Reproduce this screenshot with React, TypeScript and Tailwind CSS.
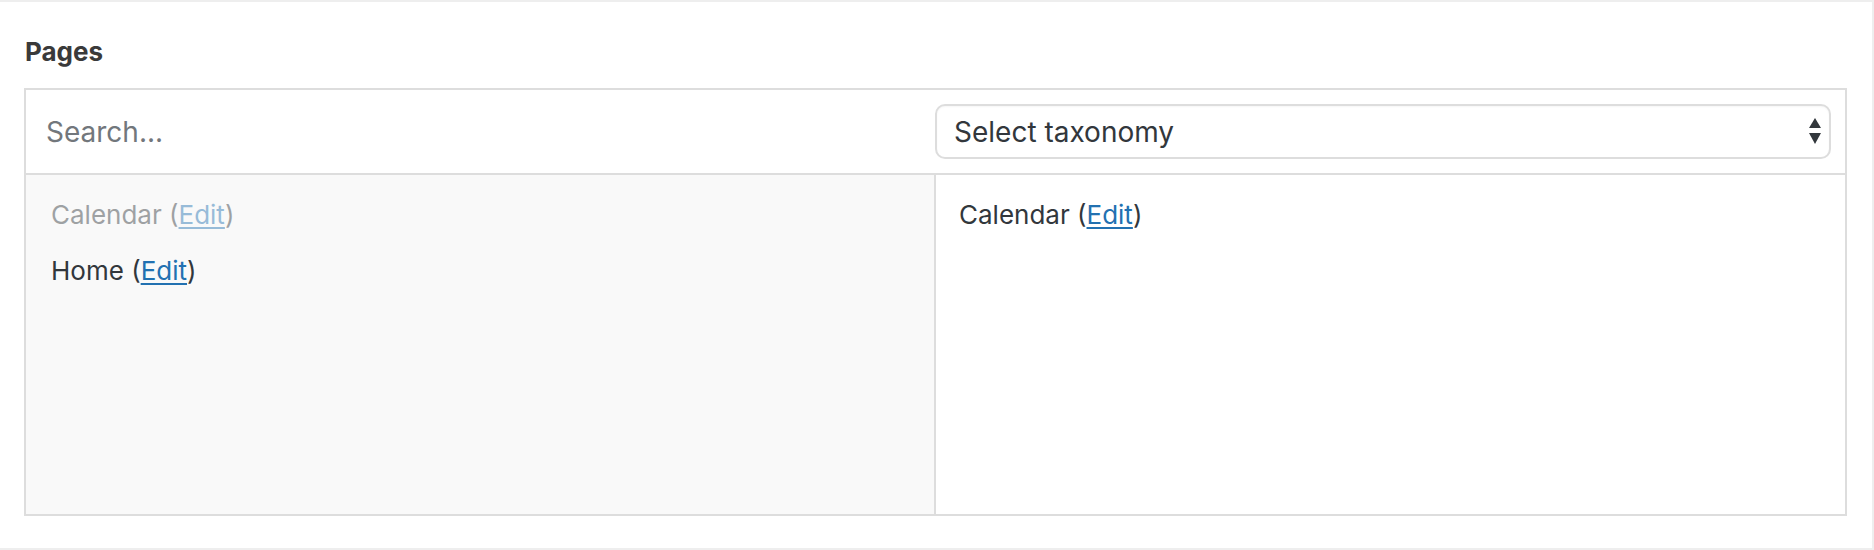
import React from 'react';

const items = [
  { name: 'Calendar', muted: true },
  { name: 'Home', muted: false },
];

const selected = ['Calendar'];

export default function App() {
  return (
    <div className="w-[1874px] h-[550px] bg-white border-t-2 border-r-2 border-b-2 border-[#eeeeee] pl-[24px] pr-[25px] pt-[34px] font-['Inter',sans-serif]">
      <h2 className="text-[26px] leading-[32px] font-bold text-[#3a3a3a] pl-[1px]">Pages</h2>

      <div className="mt-[20px] border-2 border-[#dddddd]">
        {/* header: search + taxonomy select */}
        <div className="grid grid-cols-[908px_1fr] h-[85px] border-b-2 border-[#dddddd]">
          <input
            type="text"
            placeholder="Search..."
            className="h-full pl-[20px] bg-transparent outline-none text-[28px] text-[#32373c] placeholder:text-[#72777c]"
          />
          <div className="flex items-center pl-[1px] pr-[14px]">
            <div className="relative w-full">
              <select className="appearance-none w-full h-[55px] pl-[17px] pr-[40px] border-2 border-[#dddddd] rounded-[10px] bg-white text-[28px] text-[#32373c] shadow-[inset_0_1px_2px_rgba(0,0,0,0.04)] outline-none">
                <option>Select taxonomy</option>
              </select>
              <svg className="absolute right-[9px] top-[14px] pointer-events-none" width="14" height="28" viewBox="0 0 14 28">
                <polygon points="7,0 13,10 1,10" fill="#32373c" />
                <polygon points="1,15 13,15 7,26" fill="#32373c" />
              </svg>
            </div>
          </div>
        </div>

        {/* body: available items | selected items */}
        <div className="grid grid-cols-[908px_1fr] h-[339px]">
          <ul className="bg-[#f9f9f9] pl-[25px] pt-[24px] flex flex-col gap-[24px]">
            {items.map((it) => (
              <li
                key={it.name}
                className={`text-[26px] leading-[32px] text-[#32373c] ${it.muted ? 'opacity-45' : ''}`}
              >
                {it.name} (<a href="#" className="text-[#2271b1] underline underline-offset-[3px] decoration-2">Edit</a>)
              </li>
            ))}
          </ul>
          <ul className="border-l-2 border-[#dddddd] pl-[23px] pt-[24px] flex flex-col gap-[24px]">
            {selected.map((name) => (
              <li key={name} className="text-[26px] leading-[32px] text-[#32373c]">
                {name} (<a href="#" className="text-[#2271b1] underline underline-offset-[3px] decoration-2">Edit</a>)
              </li>
            ))}
          </ul>
        </div>
      </div>
    </div>
  );
}
